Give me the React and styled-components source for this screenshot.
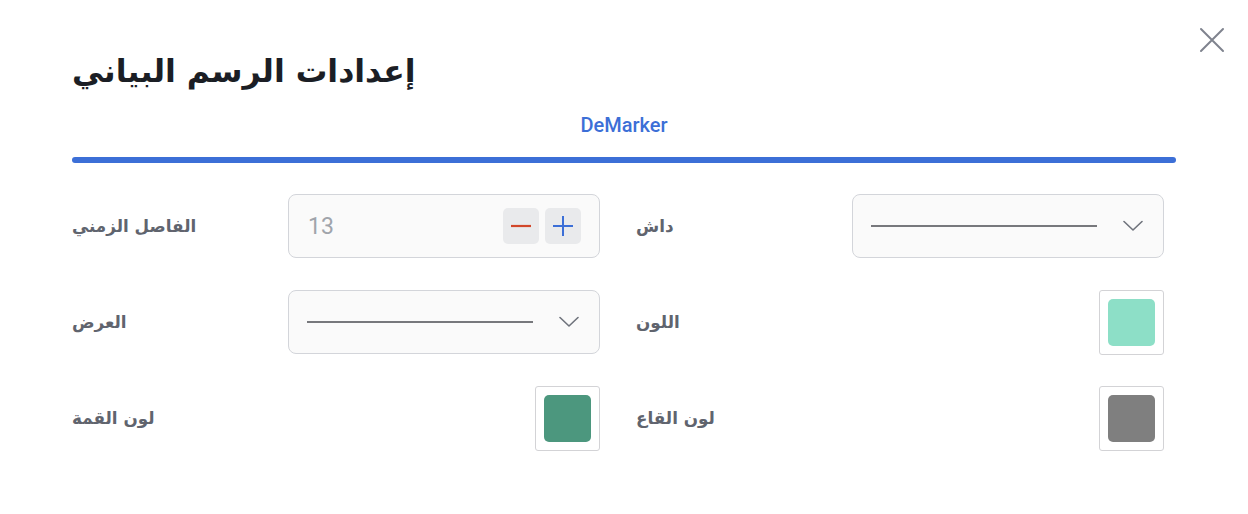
import React from "react";
import styled, { createGlobalStyle } from "styled-components";

const GlobalStyle = createGlobalStyle`
  html, body { margin: 0; padding: 0; background: #ffffff; }
  body { font-family: Roboto, "DejaVu Sans", sans-serif; }
  * { box-sizing: border-box; }
`;

const Dialog = styled.div`
  position: relative;
  width: 1248px;
  height: 514px;
  padding: 48px 72px 0 72px;
  background: #ffffff;
`;

const CloseButton = styled.button`
  position: absolute;
  top: 27px;
  right: 23px;
  width: 26px;
  height: 26px;
  padding: 0;
  border: none;
  background: transparent;
  display: flex;
  align-items: center;
  justify-content: center;
  cursor: pointer;
`;

const Header = styled.div`
  display: flex;
  justify-content: flex-start;
  height: 48px;
`;

const Title = styled.h1`
  margin: 0;
  line-height: 46px;
  font-family: "DejaVu Sans", sans-serif;
  font-size: 31.5px;
  font-weight: 700;
  color: #1b1e25;
  direction: rtl;
`;

const TabBar = styled.div`
  margin-top: 14px;
  display: flex;
  flex-direction: column;
  align-items: center;
`;

const Tab = styled.div`
  height: 30px;
  line-height: 30px;
  font-family: Roboto, sans-serif;
  font-size: 20px;
  font-weight: 500;
  color: #3c6fd7;
`;

const TabIndicator = styled.div`
  margin-top: 17px;
  width: 100%;
  height: 6px;
  border-radius: 3px;
  background: #3c6fd7;
`;

const Grid = styled.div`
  margin-top: 31px;
  margin-right: 12px;
  display: grid;
  grid-template-columns: 1fr 1fr;
  column-gap: 36px;
  row-gap: 32px;
`;

const Field = styled.div`
  display: flex;
  align-items: center;
  justify-content: space-between;
  height: 64px;
`;

const Label = styled.span`
  font-family: "DejaVu Sans", sans-serif;
  font-size: 16.8px;
  font-weight: 700;
  color: #60646e;
  direction: rtl;
`;

const Box = styled.div`
  width: 312px;
  height: 64px;
  border: 1px solid #d3d5da;
  border-radius: 8px;
  background: #fafafa;
  display: flex;
  align-items: center;
`;

const NumberBox = styled(Box)`
  padding: 0 18px 0 19px;
  justify-content: space-between;
`;

const NumberValue = styled.span`
  font-family: Roboto, sans-serif;
  font-size: 23px;
  color: #a0a4ab;
`;

const StepGroup = styled.div`
  display: flex;
  gap: 6px;
`;

const StepButton = styled.button`
  width: 36px;
  height: 36px;
  padding: 0;
  border: none;
  border-radius: 5px;
  background: #e9eaec;
  display: flex;
  align-items: center;
  justify-content: center;
`;

const SelectBox = styled(Box)`
  padding: 0 20px 0 18px;
`;

const LinePreview = styled.div`
  flex: 1;
  height: 2px;
  background: #77787c;
  margin-right: 26px;
`;

const SwatchFrame = styled.div`
  width: 65px;
  height: 65px;
  border: 1px solid #d3d3d6;
  border-radius: 3px;
  background: #ffffff;
  padding: 8px;
`;

const Swatch = styled.div`
  width: 100%;
  height: 100%;
  border-radius: 5px;
  background: ${(p) => p.$color};
`;

const Chevron = () => (
  <svg width="20" height="12" viewBox="0 0 20 12" fill="none">
    <path d="M1 1.5 L10 10 L19 1.5" stroke="#6f737c" strokeWidth="1.6" strokeLinecap="round" strokeLinejoin="round" />
  </svg>
);

const Select = () => (
  <SelectBox>
    <LinePreview />
    <Chevron />
  </SelectBox>
);

const ColorPicker = ({ color }) => (
  <SwatchFrame>
    <Swatch $color={color} />
  </SwatchFrame>
);

export default function App() {
  return (
    <>
      <GlobalStyle />
      <Dialog>
        <CloseButton aria-label="close">
          <svg width="26" height="26" viewBox="0 0 26 26" fill="none">
            <path d="M2 2 L24 24 M24 2 L2 24" stroke="#7f838e" strokeWidth="2" strokeLinecap="round" />
          </svg>
        </CloseButton>
        <Header>
          <Title>إعدادات الرسم البياني</Title>
        </Header>
        <TabBar>
          <Tab>DeMarker</Tab>
          <TabIndicator />
        </TabBar>
        <Grid>
          <Field>
            <Label>الفاصل الزمني</Label>
            <NumberBox>
              <NumberValue>13</NumberValue>
              <StepGroup>
                <StepButton aria-label="decrease">
                  <svg width="20" height="20" viewBox="0 0 20 20">
                    <path d="M0 10 H20" stroke="#d2472a" strokeWidth="2.2" />
                  </svg>
                </StepButton>
                <StepButton aria-label="increase">
                  <svg width="20" height="20" viewBox="0 0 20 20">
                    <path d="M0 10 H20 M10 0 V20" stroke="#3c6fd7" strokeWidth="2" />
                  </svg>
                </StepButton>
              </StepGroup>
            </NumberBox>
          </Field>
          <Field>
            <Label>داش</Label>
            <Select />
          </Field>
          <Field>
            <Label>العرض</Label>
            <Select />
          </Field>
          <Field>
            <Label>اللون</Label>
            <ColorPicker color="#8ddfc7" />
          </Field>
          <Field>
            <Label>لون القمة</Label>
            <ColorPicker color="#4c977e" />
          </Field>
          <Field>
            <Label>لون القاع</Label>
            <ColorPicker color="#7f7f7f" />
          </Field>
        </Grid>
      </Dialog>
    </>
  );
}
